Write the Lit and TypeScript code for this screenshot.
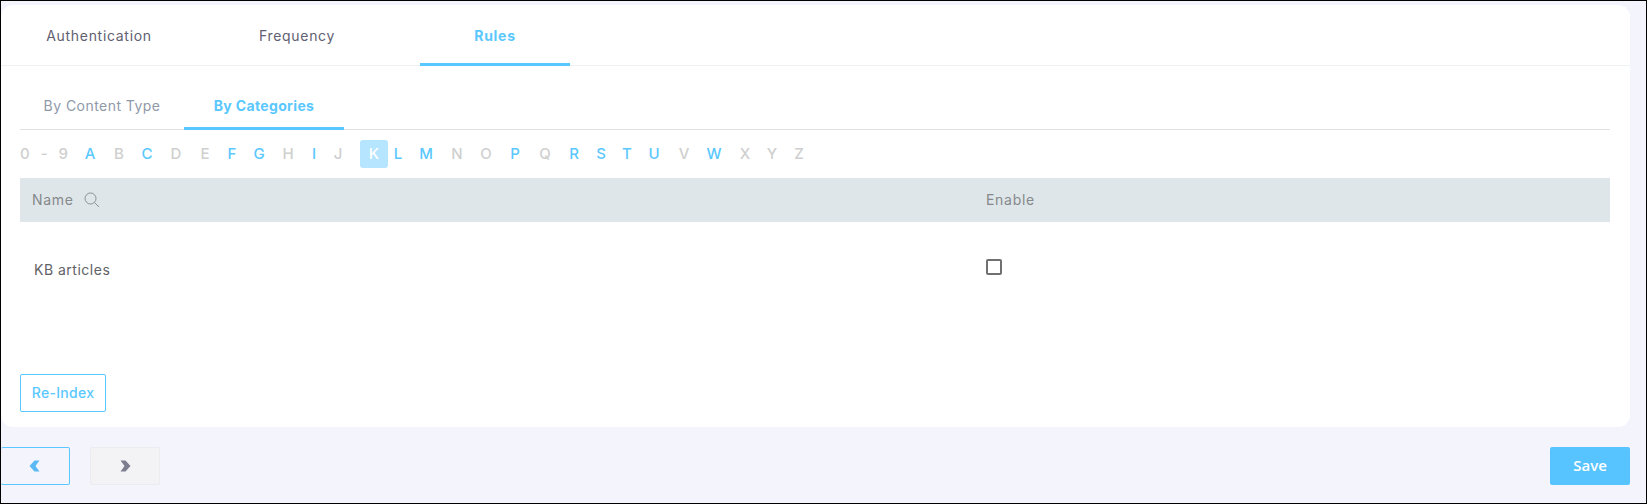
import { html, css, LitElement, svg } from 'lit';
import { customElement } from 'lit/decorators.js';

// centre x of each letter in the index bar, in page pixels
const LETTERS: [string, number, boolean][] = [
    ['A', 90, true], ['B', 119, false], ['C', 147, true], ['D', 176, false], ['E', 205, false],
    ['F', 232, true], ['G', 259, true], ['H', 288, false], ['I', 314, true], ['J', 338, false],
    ['K', 374, true], ['L', 398, true], ['M', 426, true], ['N', 457, false], ['O', 486, false],
    ['P', 515, true], ['Q', 545, false], ['R', 574, true], ['S', 601, true], ['T', 627, true],
    ['U', 654, true], ['V', 684, false], ['W', 714, true], ['X', 745, false], ['Y', 772, false],
    ['Z', 799, false],
];

const chevron = (d: string) => svg`<svg width="12" height="12" viewBox="0 0 12 12"><path d=${d} fill="currentColor"/></svg>`;

@customElement('app-root')
export class AppRoot extends LitElement {
    static styles = css`
    :host {
        display: block;
        box-sizing: border-box;
        width: 1647px;
        height: 504px;
        border: 1px solid #000;
        background: #f4f5fc;
        padding-top: 4px;
        overflow: hidden;
        font-family: Inter, "Open Sans", sans-serif;
        font-size: 14px;
        letter-spacing: 0.7px;
    }
    .card {
        box-sizing: border-box;
        width: 1629px;
        height: 422px;
        background: #fff;
        border-radius: 12px;
        padding-bottom: 15px;
        display: flex;
        flex-direction: column;
    }
    .tabs {
        display: flex;
        gap: 48px;
        height: 61px;
        box-sizing: border-box;
        padding-left: 23px;
        border-bottom: 1px solid #eef0f2;
    }
    .tab {
        width: 150px;
        height: 61px;
        box-sizing: border-box;
        display: flex;
        align-items: center;
        justify-content: center;
        color: #5f6072;
    }
    .tab.active {
        color: #5ac8ff;
        font-weight: 700;
        border-bottom: 3px solid #5ac8ff;
        padding-top: 3px;
    }
    .body {
        flex: 1;
        display: flex;
        flex-direction: column;
        padding: 0 19px;
        width: 1590px;
    }
    .subtabs {
        display: flex;
        height: 64px;
        box-sizing: border-box;
        border-bottom: 1px solid #dfe1e3;
    }
    .subtab {
        width: 164px;
        height: 64px;
        box-sizing: border-box;
        display: flex;
        align-items: center;
        justify-content: center;
        color: #8f99aa;
        padding-top: 14px;
        letter-spacing: 0.45px;
    }
    .subtab.active {
        width: 160px;
        color: #5ac8ff;
        font-weight: 700;
        border-bottom: 3px solid #5ac8ff;
        padding-top: 17px;
        letter-spacing: 0.35px;
    }
    .alpha {
        display: flex;
        align-items: center;
        height: 28px;
        margin-top: 10px;
        font-weight: 500;
        letter-spacing: 0;
        color: #cfcfcf;
        font-size: 15px;
    }
    .digits {
        width: 48px;
        display: flex;
        justify-content: space-between;
        padding-bottom: 1px;
    }
    .letter {
        flex: none;
        box-sizing: border-box;
        width: 28px;
        height: 28px;
        padding-bottom: 1px;
        display: flex;
        align-items: center;
        justify-content: center;
        border-radius: 3px;
    }
    .letter.on {
        color: #5ac8ff;
    }
    .letter.current {
        background: #b5e5ff;
        color: #fff;
    }
    .head {
        display: grid;
        grid-template-columns: 966px 1fr;
        align-items: center;
        box-sizing: border-box;
        height: 44px;
        margin-top: 10px;
        padding-bottom: 1px;
        background: #dfe6e9;
        color: #85898c;
    }
    .name {
        display: flex;
        align-items: center;
        gap: 10px;
        padding-left: 12px;
    }
    .row {
        display: grid;
        grid-template-columns: 966px 1fr;
        align-items: center;
        height: 94px;
        color: #5f6266;
        letter-spacing: 0.5px;
    }
    .row .label {
        padding-left: 14px;
    }
    .check {
        appearance: none;
        display: block;
        box-sizing: border-box;
        width: 16px;
        height: 16px;
        margin: 0 0 4px;
        border: 2px solid #707070;
        border-radius: 2px;
        background: #fff;
    }
    .reindex {
        align-self: flex-start;
        margin-top: auto;
        box-sizing: border-box;
        width: 86px;
        height: 38px;
        padding: 0 0 2px;
        border: 1px solid #5ac8ff;
        border-radius: 2px;
        background: #fff;
        color: #5ac8ff;
        font: inherit;
        font-weight: 500;
        letter-spacing: 0.3px;
    }
    .footer {
        display: flex;
        width: 1629px;
        margin-top: 20px;
        align-items: flex-start;
    }
    .nav {
        box-sizing: border-box;
        width: 70px;
        height: 38px;
        padding: 0;
        display: flex;
        align-items: center;
        justify-content: center;
        border-radius: 2px;
    }
    .prev {
        width: 69px;
        border: 1px solid #5ac8ff;
        border-left: none;
        background: transparent;
        color: #5ab8f5;
    }
    .next {
        margin-left: 20px;
        border: 1px solid #ececf0;
        background: #f3f3f6;
        color: #7d7d90;
    }
    .save {
        margin-left: auto;
        box-sizing: border-box;
        width: 80px;
        height: 38px;
        padding: 0 0 2px;
        border: none;
        border-radius: 2px;
        background: #57c4ff;
        color: #fff;
        font-family: "Open Sans", sans-serif;
        font-size: 15px;
        font-weight: 600;
        letter-spacing: 0;
    }
    `;

    render() {
        let last = 68;
        return html`
            <div class="card">
                <div class="tabs">
                    <div class="tab">Authentication</div>
                    <div class="tab">Frequency</div>
                    <div class="tab active">Rules</div>
                </div>
                <div class="body">
                    <div class="subtabs">
                        <div class="subtab">By Content Type</div>
                        <div class="subtab active">By Categories</div>
                    </div>
                    <div class="alpha">
                        <div class="digits"><span>0</span><span>-</span><span>9</span></div>
                        ${LETTERS.map(([l, x, on]) => {
                            const gap = x - 14 - last;
                            last = x + 14;
                            const cls = `letter ${on ? 'on' : ''} ${l === 'K' ? 'current' : ''}`;
                            return html`<div class=${cls} style=${`margin-left:${gap}px`}>${l}</div>`;
                        })}
                    </div>
                    <div class="head">
                        <div class="name">
                            Name
                            <svg width="16" height="16" viewBox="0 0 16 16" fill="none" stroke="#8b9094" stroke-width="1">
                                <circle cx="6.5" cy="6.5" r="5.5"/>
                                <path d="M10.5 10.5L15 15"/>
                            </svg>
                        </div>
                        <div>Enable</div>
                    </div>
                    <div class="row">
                        <div class="label">KB articles</div>
                        <div><input class="check" type="checkbox" /></div>
                    </div>
                    <button class="reindex">Re-Index</button>
                </div>
            </div>
            <div class="footer">
                <button class="nav prev">${chevron('M5.5 0.5H10.5L6.5 6L10.5 11.5H5.5L0.5 6Z')}</button>
                <button class="nav next">${chevron('M1.5 0.5H6.5L11.5 6L6.5 11.5H1.5L5.5 6Z')}</button>
                <button class="save">Save</button>
            </div>
        `;
    }
}
